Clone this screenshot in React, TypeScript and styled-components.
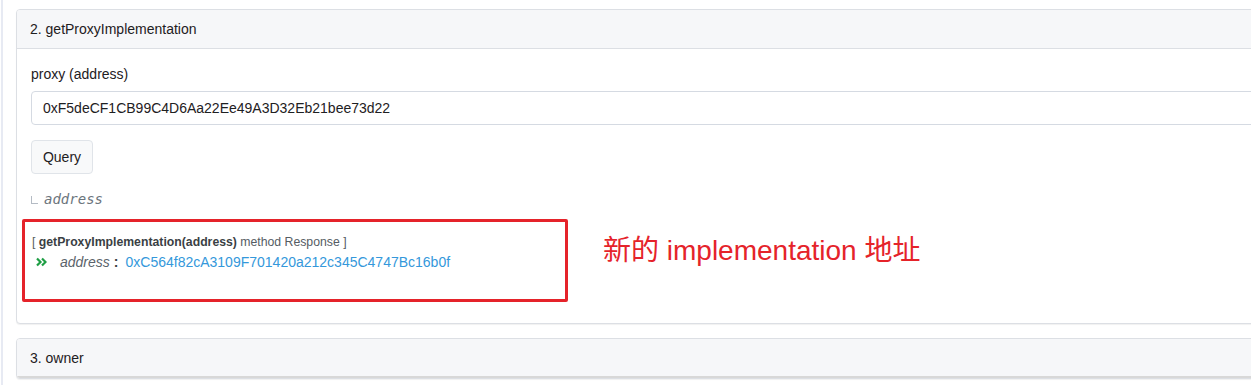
import styled, { createGlobalStyle } from "styled-components";

const GlobalStyle = createGlobalStyle`
  html, body {
    margin: 0;
    padding: 0;
    overflow: hidden;
    background: #fff;
  }

  body {
    font-family: "Liberation Sans", Arial, "Noto Sans CJK SC", sans-serif;
    font-size: 14px;
    color: #1e2022;
  }

  * {
    box-sizing: border-box;
  }
`;

const Root = styled.div`
  display: flex;
  min-height: 100vh;
  width: 1320px;
`;

const PageRule = styled.div`
  width: 2px;
  margin-left: 1px;
  flex-shrink: 0;
  background-color: #e7eaf3;
`;

const Content = styled.div`
  flex-grow: 1;
  padding: 9px 0 0 13px;
  display: flex;
  flex-direction: column;
  gap: 14px;
`;

const Card = styled.div`
  border: 1px solid #dcdfe4;
  border-radius: 4px;
  background-color: #fff;
  box-shadow: 0 1px 1px rgba(0, 0, 0, 0.06);
  overflow: hidden;
`;

const CardHeader = styled.div<{ $closed?: boolean }>`
  height: 39px;
  padding: 0 13px;
  display: flex;
  align-items: center;
  background-color: #f6f7f9;
  border-bottom: ${(props) => (props.$closed ? "2px solid #d8d8d8" : "1px solid #dcdfe4")};
  line-height: 1;
`;

const CardBody = styled.div`
  padding: 15px 14px 21px;
  display: flex;
  flex-direction: column;
`;

const Label = styled.label`
  line-height: 21px;
  margin-bottom: 6px;
`;

const AddressInput = styled.div`
  height: 34px;
  padding: 0 11px;
  display: flex;
  align-items: center;
  border: 1px solid #d5dae2;
  border-radius: 4px;
  color: #1e2022;
`;

const QueryButton = styled.button`
  align-self: flex-start;
  margin-top: 15px;
  width: 62px;
  height: 34px;
  padding: 0;
  font-family: inherit;
  font-size: 14px;
  color: #1e2022;
  background-color: #f8f9fa;
  border: 1px solid #e0e4e9;
  border-radius: 4px;
`;

const OutputType = styled.div`
  margin-top: 14px;
  display: flex;
  align-items: center;
  gap: 6px;
  height: 21px;
`;

const Corner = styled.span`
  width: 7px;
  height: 8px;
  margin-top: 2px;
  border-left: 1px solid #b4bbc4;
  border-bottom: 1px solid #b4bbc4;
`;

const MonoItalic = styled.span`
  font-family: "DejaVu Sans Mono", "Liberation Mono", monospace;
  font-style: italic;
  font-size: 14px;
  color: #6c757d;
`;

const ResponseRow = styled.div`
  margin-top: 10px;
  margin-left: -9px;
  display: flex;
  align-items: flex-start;
`;

const Highlight = styled.div`
  width: 546px;
  height: 83px;
  padding: 10px 7px 0;
  border: 3px solid #e5232a;
  border-radius: 2px;
`;

const ResponseTitle = styled.div`
  font-size: 12.25px;
  line-height: 20px;
  color: #555c63;

  b {
    color: #3a3f44;
  }
`;

const ResponseLine = styled.div`
  display: flex;
  align-items: center;
  height: 20px;
  padding-left: 4px;
`;

const Arrows = styled.svg`
  width: 11px;
  height: 10px;
  margin-right: 13px;
`;

const FieldName = styled.span`
  font-style: italic;
  color: #5b636b;
`;

const Colon = styled.b`
  margin: 0 7px 0 4px;
  color: #3a3f44;
`;

const ValueLink = styled.a`
  color: #3498db;
  text-decoration: none;
`;

const Note = styled.div`
  margin: 15px 0 0 35px;
  font-family: "Liberation Sans", Arial, "Noto Sans CJK SC", sans-serif;
  font-size: 28px;
  line-height: 34px;
  color: #e5232a;
  white-space: nowrap;
`;

const App = (): JSX.Element => {
  return (
    <Root>
      <GlobalStyle />
      <PageRule />
      <Content>
        <Card>
          <CardHeader>2. getProxyImplementation</CardHeader>
          <CardBody>
            <Label>proxy (address)</Label>
            <AddressInput>0xF5deCF1CB99C4D6Aa22Ee49A3D32Eb21bee73d22</AddressInput>
            <QueryButton>Query</QueryButton>
            <OutputType>
              <Corner />
              <MonoItalic>address</MonoItalic>
            </OutputType>
            <ResponseRow>
              <Highlight>
                <ResponseTitle>
                  [ <b>getProxyImplementation(address)</b> method Response ]
                </ResponseTitle>
                <ResponseLine>
                  <Arrows viewBox="0 0 11 10">
                    <path
                      d="M1 1.5 L4.5 5 L1 8.5 M6 1.5 L9.5 5 L6 8.5"
                      fill="none"
                      stroke="#1e9e44"
                      strokeWidth="2.2"
                    />
                  </Arrows>
                  <FieldName>address</FieldName>
                  <Colon>:</Colon>
                  <ValueLink>0xC564f82cA3109F701420a212c345C4747Bc16b0f</ValueLink>
                </ResponseLine>
              </Highlight>
              <Note>新的 implementation 地址</Note>
            </ResponseRow>
          </CardBody>
        </Card>
        <Card>
          <CardHeader $closed>3. owner</CardHeader>
        </Card>
      </Content>
    </Root>
  );
};

export default App;
